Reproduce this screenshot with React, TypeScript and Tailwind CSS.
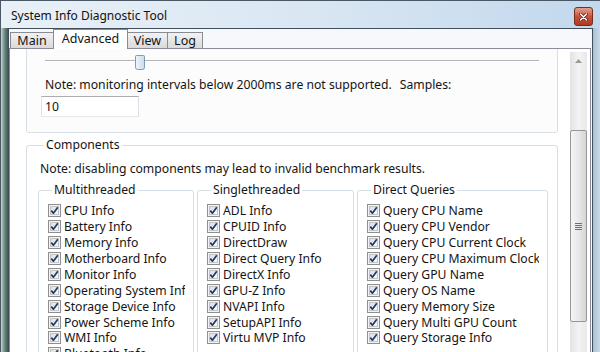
import React from "react";

const mt = ["CPU Info","Battery Info","Memory Info","Motherboard Info","Monitor Info","Operating System Info","Storage Device Info","Power Scheme Info","WMI Info","Bluetooth Info"];
const st = ["ADL Info","CPUID Info","DirectDraw","Direct Query Info","DirectX Info","GPU-Z Info","NVAPI Info","SetupAPI Info","Virtu MVP Info"];
const dq = ["Query CPU Name","Query CPU Vendor","Query CPU Current Clock","Query CPU Maximum Clock","Query GPU Name","Query OS Name","Query Memory Size","Query Multi GPU Count","Query Storage Info"];

function Check() {
  return (
    <svg width="13" height="13" viewBox="0 0 13 13" className="shrink-0">
      <defs>
        <linearGradient id="cbg" x1="0" y1="0" x2="1" y2="1">
          <stop offset="0" stopColor="#dcdcdc" />
          <stop offset="1" stopColor="#fbfbfb" />
        </linearGradient>
      </defs>
      <rect x="0.5" y="0.5" width="12" height="12" fill="#f4f4f4" stroke="#8e8f8f" />
      <rect x="2.5" y="2.5" width="8" height="8" fill="url(#cbg)" stroke="#c4c4c4" />
      <path d="M3.3 6.6 L5.4 9.2 L9.8 3.2" fill="none" stroke="#1f3b6e" strokeWidth="1.7" strokeLinejoin="round" />
    </svg>
  );
}

function Group({ title, items, w }: { title: string; items: string[]; w: string }) {
  return (
    <fieldset className={`${w} shrink-0 min-w-0 border border-[#d5dfe5] rounded-[3px] pl-[9px] pr-[8px] pt-[5px]`}>
      <legend className="ml-[4px] px-[2px] leading-[16px]">{title}</legend>
      <div className="overflow-hidden whitespace-nowrap">
        {items.map((t) => (
          <div key={t} className="h-[15.875px] flex items-center gap-[3px]">
            <Check />
            <span className="leading-[15px]">{t}</span>
          </div>
        ))}
      </div>
    </fieldset>
  );
}

export default function App() {
  return (
    <div className="w-[600px] h-[352px] overflow-hidden flex flex-col bg-[#c4d8ea] border-l border-t border-[#4a5866] font-['Noto_Sans',sans-serif] text-[12.2px] text-[#141414]">
      {/* title bar */}
      <div className="h-[27px] shrink-0 flex justify-between pl-[10px] pr-[7px] bg-gradient-to-r from-[#e9f0f7] via-[#dae7f3] to-[#c2d8ed]">
        <div className="text-[12px] leading-[27px] pt-[1px] text-[#111]">System Info Diagnostic Tool</div>
        <div className="mt-[6px] w-[19px] h-[19px] rounded-[3px] border border-[#7a2c20] bg-gradient-to-b from-[#e4a08f] via-[#c8533d] to-[#b2371f] flex items-center justify-center">
          <svg width="9" height="8" viewBox="0 0 9 8">
            <path d="M1.5 1 L7.5 7 M7.5 1 L1.5 7" stroke="#5a1a10" strokeWidth="3" strokeLinecap="round" />
            <path d="M1.5 1 L7.5 7 M7.5 1 L1.5 7" stroke="#ffffff" strokeWidth="1.6" strokeLinecap="round" />
          </svg>
        </div>
      </div>
      {/* frame + client */}
      <div className="flex-1 min-h-0 flex">
        <div className="w-[7px] shrink-0 bg-gradient-to-r from-[#c9d3cf] via-[#6d8a83] to-[#3e5a57]" />
        <div className="w-[585px] shrink-0 flex flex-col border border-b-0 border-[#3f4e5c] bg-[#f6f8fb]">
          {/* tabs */}
          <div className="h-[19px] shrink-0 flex items-end pl-[1px] text-[12.5px]">
            <div className="w-[44px] h-[16px] border border-b-0 border-[#898c95] bg-gradient-to-b from-[#f2f2f2] to-[#dadada] flex items-center justify-center leading-[15px]">Main</div>
            <div className="relative z-10 -ml-px w-[75px] h-[20px] -mb-px border border-b-0 border-[#898c95] bg-white flex items-center justify-center leading-[16px] pb-[1px]">Advanced</div>
            <div className="-ml-px w-[41px] h-[16px] border border-b-0 border-[#898c95] bg-gradient-to-b from-[#f2f2f2] to-[#dadada] flex items-center justify-center leading-[15px]">View</div>
            <div className="-ml-px w-[36px] h-[16px] border border-b-0 border-[#898c95] bg-gradient-to-b from-[#f2f2f2] to-[#dadada] flex items-center justify-center leading-[15px]">Log</div>
          </div>
          {/* panel */}
          <div className="flex-1 min-h-0 flex mr-[1px] border border-b-0 border-[#898c95] bg-white">
            <div className="flex-1 min-w-0 overflow-hidden pl-[16px] pr-[12px]">
              {/* monitoring box (scrolled) */}
              <div className="-mt-[10px] border border-[#d5dfe5] rounded-[3px] px-[14px] pb-[15px] bg-[#fcfcfc]">
                <div className="relative h-[15px] mt-[15px] mx-[4px]">
                  <div className="absolute left-0 right-0 top-[5px] h-[2px] border-t border-[#b4b4b4] bg-white" />
                  <svg className="absolute left-[90px] top-0" width="10" height="15" viewBox="0 0 10 15">
                    <defs>
                      <linearGradient id="thb" x1="0" y1="0" x2="1" y2="0">
                        <stop offset="0" stopColor="#eef5fb" />
                        <stop offset="1" stopColor="#c8dced" />
                      </linearGradient>
                    </defs>
                    <path d="M0.5 1.5 Q0.5 0.5 1.5 0.5 H8.5 Q9.5 0.5 9.5 1.5 V12.5 Q9.5 14.5 7.5 14.5 H2.5 Q0.5 14.5 0.5 12.5 Z" fill="url(#thb)" stroke="#7d9ab6" />
                  </svg>
                </div>
                <div className="mt-[7px] h-[16px] leading-[16px] pl-[4px] whitespace-nowrap">
                  Note: monitoring intervals below 2000ms are not supported.<span className="ml-[8px]">Samples:</span>
                </div>
                <div className="mt-[3px] w-[98px] h-[21px] border border-[#abadb3] border-l-[#e2e3ea] border-r-[#dbdfe6] border-b-[#e3e9ef] bg-white pl-[3px] leading-[19px]">10</div>
              </div>
              {/* components */}
              <fieldset className="mt-[4px] min-w-0 border border-[#d5dfe5] rounded-[3px] pl-[11px] pr-[9px] pt-[8px]">
                <legend className="ml-[6px] px-[2px] leading-[16px]">Components</legend>
                <div className="ml-[2px] h-[16px] leading-[16px] whitespace-nowrap">Note: disabling components may lead to invalid benchmark results.</div>
                <div className="mt-[5px] flex gap-[3px]">
                  <Group title="Multithreaded" items={mt} w="w-[156px]" />
                  <Group title="Singlethreaded" items={st} w="w-[157px]" />
                  <Group title="Direct Queries" items={dq} w="w-[191px]" />
                </div>
              </fieldset>
            </div>
            {/* scrollbar */}
            <div className="w-[17px] shrink-0 mt-[3px] mr-[3px] flex flex-col bg-gradient-to-r from-[#e3e3e3] via-[#f3f3f3] to-[#e9e9e9]">
              <div className="h-[17px] shrink-0 flex items-center justify-center">
                <svg width="7" height="4" viewBox="0 0 7 4"><path d="M0 4 L3.5 0 L7 4 Z" fill="#9a9a9a" /></svg>
              </div>
              <div className="h-[61px] shrink-0" />
              <div className="h-[192px] shrink-0 rounded-[2px] border border-[#979797] bg-gradient-to-r from-[#f4f4f4] via-[#e8e8e8] to-[#d6d6d6] flex items-center justify-center">
                <div className="flex flex-col gap-[1px]">
                  <div className="w-[7px] h-[1px] bg-[#6f6f6f]" />
                  <div className="w-[7px] h-[1px] bg-[#6f6f6f]" />
                  <div className="w-[7px] h-[1px] bg-[#6f6f6f]" />
                  <div className="w-[7px] h-[1px] bg-[#6f6f6f]" />
                </div>
              </div>
            </div>
          </div>
        </div>
        <div className="flex-1 bg-gradient-to-r from-[#a9c1d3] to-[#c8dbea]" />
      </div>
    </div>
  );
}
